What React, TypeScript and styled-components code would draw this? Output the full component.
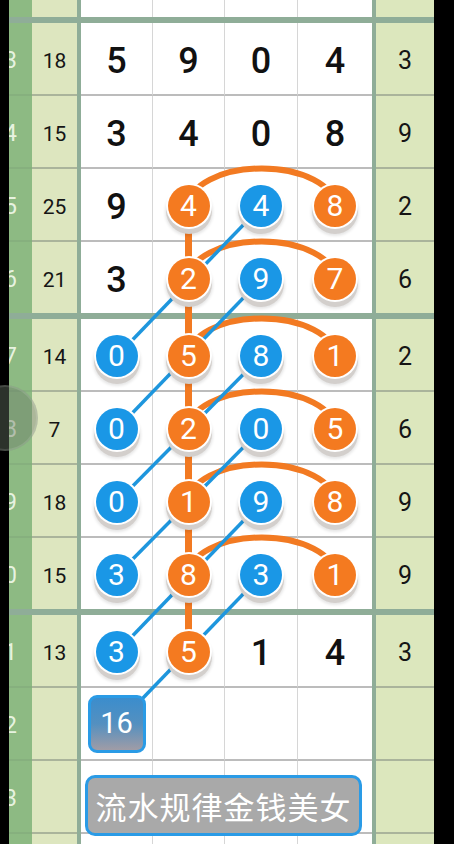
import React from "react"
import styled, { createGlobalStyle } from "styled-components"

type Mark =
  | { kind: "plain"; v: string }
  | { kind: "ball"; v: string; tone: "orange" | "blue" }
  | { kind: "tag"; v: string }
  | { kind: "empty" }

interface RowData {
  idx: string
  sum: string
  tail: string
  cells: Mark[]
  button?: string
}

const p = (v: string): Mark => ({ kind: "plain", v })
const o = (v: string): Mark => ({ kind: "ball", v, tone: "orange" })
const b = (v: string): Mark => ({ kind: "ball", v, tone: "blue" })
const e: Mark = { kind: "empty" }

const groups: RowData[][] = [
  [
    { idx: "23", sum: "18", tail: "3", cells: [p("5"), p("9"), p("0"), p("4")] },
    { idx: "24", sum: "15", tail: "9", cells: [p("3"), p("4"), p("0"), p("8")] },
    { idx: "25", sum: "25", tail: "2", cells: [p("9"), o("4"), b("4"), o("8")] },
    { idx: "26", sum: "21", tail: "6", cells: [p("3"), o("2"), b("9"), o("7")] },
  ],
  [
    { idx: "27", sum: "14", tail: "2", cells: [b("0"), o("5"), b("8"), o("1")] },
    { idx: "28", sum: "7", tail: "6", cells: [b("0"), o("2"), b("0"), o("5")] },
    { idx: "29", sum: "18", tail: "9", cells: [b("0"), o("1"), b("9"), o("8")] },
    { idx: "30", sum: "15", tail: "9", cells: [b("3"), o("8"), b("3"), o("1")] },
  ],
  [
    { idx: "31", sum: "13", tail: "3", cells: [b("3"), o("5"), p("1"), p("4")] },
    { idx: "32", sum: "", tail: "", cells: [{ kind: "tag", v: "16" }, e, e, e] },
    { idx: "33", sum: "", tail: "", cells: [e, e, e, e], button: "流水规律金钱美女" },
    { idx: "34", sum: "", tail: "", cells: [e, e, e, e] },
  ],
]

// geometry shared by the grid and the connector drawing (board coordinates)
const TOP_ROW = 17
const DIVIDER = 6
const ROW_H = 71
const LINE = 2
const COL_X = [107.5, 179.5, 252, 326]

const rowCenters: number[] = []
{
  let y = TOP_ROW
  groups.forEach((g) => {
    y += DIVIDER
    g.forEach((_, k) => {
      rowCenters.push(y + ROW_H / 2)
      y += ROW_H + (k < g.length - 1 ? LINE : 0)
    })
  })
}

const GlobalStyle = createGlobalStyle`
  html, body {
    margin: 0;
    padding: 0;
    background: #000;
  }
`

const Screen = styled.div`
  position: relative;
  width: 454px;
  height: 844px;
  overflow: hidden;
  display: flex;
  background: #000;
  font-family: Roboto, "Noto Sans", sans-serif;
`

const Edge = styled.div<{ $w: number }>`
  flex: 0 0 ${(p) => p.$w}px;
  background: #000;
`

const Board = styled.div`
  position: relative;
  flex: 0 0 425px;
  display: flex;
  flex-direction: column;
`

const Row = styled.div<{ $h: number }>`
  display: grid;
  grid-template-columns: 23px 45px 4px 291px 4px 58px;
  height: ${(p) => p.$h}px;
  flex: 0 0 auto;
`

const Divider = styled.div`
  height: ${DIVIDER}px;
  flex: 0 0 auto;
  background: #8fad98;
`

const StripCell = styled.div<{ $line: boolean }>`
  background: #8dba83;
  overflow: hidden;
  display: flex;
  align-items: center;
  justify-content: flex-end;
  padding: 4px 15px 0 0;
  box-sizing: border-box;
  border-bottom: ${(p) => (p.$line ? `${LINE}px solid #86b07e` : "none")};
  color: rgba(244, 250, 238, 0.9);
  font-size: 23px;
  white-space: nowrap;
`

const SumCell = styled.div<{ $line: boolean }>`
  background: #dde6bf;
  display: flex;
  align-items: center;
  justify-content: center;
  padding-top: 4px;
  box-sizing: border-box;
  border-bottom: ${(p) => (p.$line ? `${LINE}px solid #aab49b` : "none")};
  color: #151515;
  font-size: 21px;
`

const Separator = styled.div`
  background: #8fad98;
`

const DataGroup = styled.div`
  position: relative;
  display: grid;
  grid-template-columns: 71px 72px 73px 75px;
`

const DataCell = styled.div<{ $line: boolean; $first: boolean }>`
  background: #fff;
  display: flex;
  align-items: center;
  justify-content: center;
  box-sizing: border-box;
  border-left: ${(p) => (p.$first ? "none" : "1px solid #d6d6d6")};
  border-bottom: ${(p) => (p.$line ? `${LINE}px solid #bcbcbc` : "none")};
`

const Digit = styled.span`
  margin-top: 5px;
  font-size: 36px;
  font-weight: 500;
  color: #111;
  line-height: 1;
`

const Ball = styled.span<{ $tone: "orange" | "blue" }>`
  position: relative;
  z-index: 2;
  width: 42px;
  height: 42px;
  margin-top: 2px;
  border-radius: 50%;
  display: flex;
  align-items: center;
  justify-content: center;
  background: ${(p) => (p.$tone === "orange" ? "#f47a20" : "#1a97e6")};
  color: #fff;
  font-size: 30px;
  line-height: 1;
  box-shadow: 0 0 0 2px #fff, 0 5px 0 2px #d3cfcc, 0 6px 3px 3px rgba(0, 0, 0, 0.1);
`

const TagBox = styled.span`
  position: relative;
  z-index: 2;
  width: 58px;
  height: 58px;
  box-sizing: border-box;
  border: 3px solid #2a9be6;
  border-radius: 9px;
  display: flex;
  align-items: center;
  justify-content: center;
  background: linear-gradient(180deg, #3b8dcd 0%, #5490c0 50%, #a09ca6 100%);
  color: #fff;
  font-size: 29px;
  line-height: 1;
`

const FlowButton = styled.button`
  position: absolute;
  left: 4px;
  top: 14px;
  z-index: 2;
  width: 277px;
  height: 61px;
  padding: 0;
  box-sizing: border-box;
  border: 3px solid #2a9be6;
  border-radius: 10px;
  background: #a9a9a9;
  color: #fff;
  font-family: "Noto Sans CJK SC", sans-serif;
  font-size: 31px;
  letter-spacing: 1px;
`

const TailCell = styled.div<{ $line: boolean }>`
  background: #dce7bd;
  display: flex;
  align-items: center;
  justify-content: center;
  padding-top: 4px;
  box-sizing: border-box;
  border-bottom: ${(p) => (p.$line ? `${LINE}px solid #aab49b` : "none")};
  color: #151515;
  font-size: 25px;
`

const Connectors = styled.svg`
  position: absolute;
  left: 0;
  top: 0;
  z-index: 1;
  pointer-events: none;
`

const FloatDot = styled.div`
  position: absolute;
  left: -28px;
  top: 385px;
  z-index: 3;
  width: 66px;
  height: 66px;
  border-radius: 50%;
  background: rgba(105, 118, 102, 0.42);
  box-shadow: inset 0 0 0 2px rgba(255, 255, 255, 0.12);
`

const renderMark = (m: Mark) => {
  switch (m.kind) {
    case "plain":
      return <Digit>{m.v}</Digit>
    case "ball":
      return <Ball $tone={m.tone}>{m.v}</Ball>
    case "tag":
      return <TagBox>{m.v}</TagBox>
    default:
      return null
  }
}

const GridRow = ({ row, line }: { row: RowData; line: boolean }) => (
  <Row $h={ROW_H + (line ? LINE : 0)}>
    <StripCell $line={line}>{row.idx}</StripCell>
    <SumCell $line={line}>{row.sum}</SumCell>
    <Separator />
    <DataGroup>
      {row.cells.map((m, i) => (
        <DataCell key={i} $line={line} $first={i === 0}>
          {renderMark(m)}
        </DataCell>
      ))}
      {row.button && <FlowButton>{row.button}</FlowButton>}
    </DataGroup>
    <Separator />
    <TailCell $line={line}>{row.tail}</TailCell>
  </Row>
)

const ConnectorLayer = () => {
  const y = rowCenters.map((c) => c + 2)
  const orange = "#f27a22"
  const blue = "#1e96dd"
  const ry = 38
  const arcs = [2, 3, 4, 5, 6, 7]
  const diagonals = [4, 5, 6, 7, 8, 9]
  return (
    <Connectors width={425} height={844} viewBox="0 0 425 844">
      <line x1={COL_X[1]} y1={y[2]} x2={COL_X[1]} y2={y[8]} stroke={orange} strokeWidth={7} />
      {arcs.map((r) => (
        <path
          key={`a${r}`}
          d={`M ${COL_X[1]} ${y[r]} A ${(COL_X[3] - COL_X[1]) / 2} ${ry} 0 0 1 ${COL_X[3]} ${y[r]}`}
          fill="none"
          stroke={orange}
          strokeWidth={6}
        />
      ))}
      {diagonals.map((r) => (
        <line
          key={`d${r}`}
          x1={COL_X[0]}
          y1={y[r]}
          x2={COL_X[2]}
          y2={y[r - 2]}
          stroke={blue}
          strokeWidth={3.5}
        />
      ))}
    </Connectors>
  )
}

const App = () => {
  return (
    <>
      <GlobalStyle />
      <Screen>
        <Edge $w={9} />
        <Board>
          <Row $h={TOP_ROW}>
            <StripCell $line={false} />
            <SumCell $line={false} />
            <Separator />
            <DataGroup>
              {[0, 1, 2, 3].map((i) => (
                <DataCell key={i} $line={false} $first={i === 0} />
              ))}
            </DataGroup>
            <Separator />
            <TailCell $line={false} />
          </Row>
          {groups.map((g, gi) => (
            <React.Fragment key={gi}>
              <Divider />
              {g.map((row, k) => (
                <GridRow key={row.idx} row={row} line={k < g.length - 1} />
              ))}
            </React.Fragment>
          ))}
          <ConnectorLayer />
        </Board>
        <Edge $w={20} />
        <FloatDot />
      </Screen>
    </>
  )
}

export default App
